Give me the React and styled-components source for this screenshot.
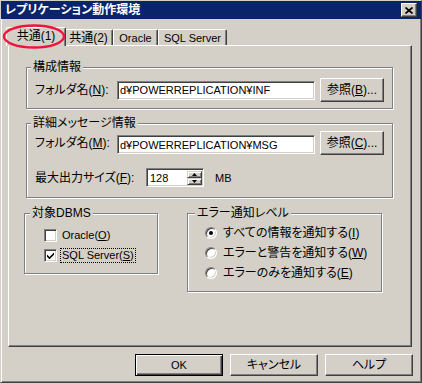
import React from 'react';
import styled, { createGlobalStyle } from 'styled-components';

const Global = createGlobalStyle`
  html, body { margin: 0; padding: 0; background: #d4d0c8; }
  body {
    font-family: "Liberation Sans", "Noto Sans CJK JP", sans-serif;
    font-size: 12px;
    font-feature-settings: "palt";
    color: #000;
  }
`;

const Window = styled.div`
  box-sizing: border-box;
  width: 422px;
  height: 383px;
  background: #d4d0c8;
  border: 1px solid;
  border-color: #d4d0c8 #404040 #404040 #d4d0c8;
  box-shadow: inset 1px 1px #fff, inset -1px -1px #808080;
  display: flex;
  flex-direction: column;
`;

const TitleBar = styled.div`
  height: 18px;
  background: #0a246a;
  display: flex;
  align-items: center;
  justify-content: space-between;
  padding: 0 4px;
  color: #fff;
  font-weight: bold;
  font-size: 12px;
  line-height: 14px;
`;

const CloseBtn = styled.div`
  box-sizing: border-box;
  width: 16px;
  height: 14px;
  background: #d4d0c8;
  border: 1px solid;
  border-color: #fff #404040 #404040 #fff;
  box-shadow: inset -1px -1px #808080;
  display: flex;
  align-items: center;
  justify-content: center;
`;

const Body = styled.div`
  flex: 1;
  display: flex;
  flex-direction: column;
  padding: 8px 0 0 7px;
`;

const TabStrip = styled.div`
  position: relative;
  display: flex;
  align-items: flex-end;
  height: 18px;
`;

const Tab = styled.div`
  box-sizing: border-box;
  position: relative;
  z-index: ${p => (p.$active ? 2 : 1)};
  width: ${p => p.$w + (p.$active ? 4 : 0)}px;
  height: ${p => (p.$active ? 19 : 16)}px;
  margin: 0 ${p => (p.$active ? '-2px' : '0')} ${p => (p.$active ? '-1px' : '0')};
  padding-bottom: ${p => (p.$active ? 2 : 0)}px;
  background: #d4d0c8;
  border-left: 1px solid #fff;
  border-top: 1px solid #fff;
  border-right: 1px solid #404040;
  border-radius: 2px 2px 0 0;
  box-shadow: inset -1px 0 #808080;
  display: flex;
  align-items: center;
  justify-content: center;
  white-space: nowrap;
  font-size: ${p => (p.$latin ? 11 : 12)}px;
  line-height: 14px;
`;

const Annotation = styled.svg`
  position: absolute;
  left: -6px;
  top: -3px;
  z-index: 5;
  overflow: visible;
`;

const Panel = styled.div`
  box-sizing: border-box;
  width: 404px;
  height: 302px;
  border: 1px solid;
  border-color: #fff #404040 #404040 #fff;
  box-shadow: inset -1px -1px #808080;
  padding: 21px 18px 0 17px;
  display: flex;
  flex-direction: column;
`;

const Group = styled.div`
  position: relative;
  box-sizing: border-box;
  border: 1px solid #808080;
  box-shadow: inset 1px 1px #fff, 1px 1px #fff;
  margin-top: ${p => p.$mt || 0}px;
  margin-left: ${p => p.$ml || 0}px;
  width: ${p => (p.$w ? `${p.$w}px` : 'auto')};
  height: ${p => (p.$h ? `${p.$h}px` : 'auto')};
  padding: ${p => p.$pad};
`;

const GroupTitle = styled.span`
  position: absolute;
  top: -8px;
  left: ${p => p.$x}px;
  padding: 0 2px;
  background: #d4d0c8;
  line-height: 14px;
  font-size: 12px;
  white-space: nowrap;
`;

const FolderRow = styled.div`
  display: grid;
  grid-template-columns: 82px 203px 64px;
  align-items: center;
  height: 24px;
`;

const Text = styled.span`
  font-size: ${p => (p.$latin ? 11 : 12)}px;
  line-height: 14px;
  white-space: nowrap;
`;

const Field = styled.div`
  box-sizing: border-box;
  width: 198px;
  height: 19px;
  background: #fff;
  border: 1px solid;
  border-color: #808080 #fff #fff #808080;
  box-shadow: inset 1px 1px #404040, inset -1px -1px #d4d0c8;
  padding: 0 2px 0 2px;
  display: flex;
  align-items: center;
  font-size: 11px;
  line-height: 14px;
  white-space: nowrap;
  overflow: hidden;
  margin-top: ${p => p.$dy || 0}px;
`;

const Button = styled.div`
  box-sizing: border-box;
  width: ${p => p.$w}px;
  height: ${p => p.$h}px;
  background: #d4d0c8;
  border: 1px solid;
  border-color: ${p => (p.$default ? '#000' : '#fff #404040 #404040 #fff')};
  box-shadow: ${p =>
    p.$default
      ? 'inset 1px 1px #fff, inset -1px -1px #404040, inset -2px -2px #808080'
      : 'inset -1px -1px #808080'};
  display: flex;
  align-items: center;
  justify-content: center;
  font-size: ${p => (p.$latin ? 11 : 12)}px;
  line-height: 14px;
  white-space: nowrap;
`;

const SizeRow = styled.div`
  display: flex;
  align-items: center;
  height: 19px;
  margin-top: 13px;
`;

const SizeLabel = styled(Text)`
  width: 111px;
`;

const SpinBox = styled.div`
  box-sizing: border-box;
  width: 58px;
  height: 19px;
  background: #fff;
  border: 1px solid;
  border-color: #808080 #fff #fff #808080;
  box-shadow: inset 1px 1px #404040, inset -1px -1px #d4d0c8;
  padding: 2px 1px 1px 2px;
  display: flex;
`;

const SpinValue = styled.span`
  flex: 1;
  font-size: 11px;
  line-height: 14px;
  padding-left: 1px;
`;

const SpinButtons = styled.div`
  width: 15px;
  display: flex;
  flex-direction: column;
`;

const SpinBtn = styled.div`
  box-sizing: border-box;
  flex: 1;
  background: #d4d0c8;
  border: 1px solid;
  border-color: #d4d0c8 #404040 #404040 #d4d0c8;
  box-shadow: inset 1px 1px #fff, inset -1px -1px #808080;
  display: flex;
  align-items: center;
  justify-content: center;
`;

const Unit = styled(Text)`
  margin-left: 11px;
`;

const BottomRow = styled.div`
  display: flex;
  align-items: flex-start;
  margin-top: 15px;
`;

const OptionList = styled.div`
  display: flex;
  flex-direction: column;
  gap: ${p => p.$gap}px;
`;

const Option = styled.div`
  display: flex;
  align-items: center;
  height: ${p => p.$h}px;
`;

const CheckBox = styled.div`
  box-sizing: border-box;
  width: 13px;
  height: 13px;
  background: #fff;
  border: 1px solid;
  border-color: #808080 #fff #fff #808080;
  box-shadow: inset 1px 1px #404040, inset -1px -1px #d4d0c8;
  display: flex;
  align-items: center;
  justify-content: center;
`;

const Radio = styled.div`
  box-sizing: border-box;
  width: 12px;
  height: 12px;
  border-radius: 50%;
  background: #fff;
  border: 1px solid;
  border-color: #808080 #fff #fff #808080;
  box-shadow: inset 1px 1px #404040, inset -1px -1px #d4d0c8;
  display: flex;
  align-items: center;
  justify-content: center;
`;

const Dot = styled.div`
  width: 4px;
  height: 4px;
  border-radius: 50%;
  background: #000;
`;

const OptionLabel = styled.span`
  margin-left: ${p => p.$gap}px;
  padding: 0 1px;
  font-size: ${p => (p.$latin ? 11 : 12)}px;
  line-height: 13px;
  white-space: nowrap;
  outline: ${p => (p.$focus ? '1px dotted #000' : 'none')};
  outline-offset: 0;
`;

const ButtonRow = styled.div`
  display: flex;
  justify-content: flex-end;
  gap: 7px;
  margin-top: 7px;
  padding-right: 8px;
`;

const Arrow = ({ up }) => (
  <svg width="5" height="3" viewBox="0 0 5 3">
    <path d={up ? 'M2.5 0 L5 3 L0 3 Z' : 'M0 0 L5 0 L2.5 3 Z'} fill="#000" />
  </svg>
);

export default function App() {
  return (
    <>
      <Global />
      <Window>
        <TitleBar>
          <span>レプリケーション動作環境</span>
          <CloseBtn>
            <svg width="8" height="7" viewBox="0 0 8 7">
              <path d="M0.5 0.5 L7.5 6.5 M7.5 0.5 L0.5 6.5" stroke="#000" strokeWidth="1.7" />
            </svg>
          </CloseBtn>
        </TitleBar>
        <Body>
          <TabStrip>
            <Tab $active $w={56}>共通(1)</Tab>
            <Tab $w={49}>共通(2)</Tab>
            <Tab $w={45} $latin>Oracle</Tab>
            <Tab $w={69} $latin>SQL Server</Tab>
            <Annotation width="64" height="25" viewBox="0 0 64 25">
              <ellipse cx="32" cy="12.5" rx="30" ry="11" fill="none" stroke="#f0143c" strokeWidth="2.4" />
            </Annotation>
          </TabStrip>
          <Panel>
            <Group $pad="10px 0 6px 8px">
              <GroupTitle $x={4}>構成情報</GroupTitle>
              <FolderRow>
                <Text>フォルダ名(<u>N</u>):</Text>
                <Field>d¥POWERREPLICATION¥INF</Field>
                <Button $w={64} $h={24}>参照(<u>B</u>)...</Button>
              </FolderRow>
            </Group>
            <Group $mt={14} $pad="7px 0 10px 8px">
              <GroupTitle $x={4}>詳細メッセージ情報</GroupTitle>
              <FolderRow>
                <Text>フォルダ名(<u>M</u>):</Text>
                <Field $dy={3}>d¥POWERREPLICATION¥MSG</Field>
                <Button $w={64} $h={24}>参照(<u>C</u>)...</Button>
              </FolderRow>
              <SizeRow>
                <SizeLabel>最大出力サイズ(<u>F</u>):</SizeLabel>
                <SpinBox>
                  <SpinValue>128</SpinValue>
                  <SpinButtons>
                    <SpinBtn><Arrow up /></SpinBtn>
                    <SpinBtn><Arrow /></SpinBtn>
                  </SpinButtons>
                </SpinBox>
                <Unit $latin>MB</Unit>
              </SizeRow>
            </Group>
            <BottomRow>
              <Group $ml={-2} $w={134} $h={61} $pad="13px 0 0 19px">
                <GroupTitle $x={5}>対象DBMS</GroupTitle>
                <OptionList $gap={4}>
                  <Option $h={16}>
                    <CheckBox />
                    <OptionLabel $gap={4} $latin>Oracle(<u>O</u>)</OptionLabel>
                  </Option>
                  <Option $h={16}>
                    <CheckBox>
                      <svg width="7" height="7" viewBox="0 0 7 7">
                        <path d="M0 2.5 L2.5 5 L7 0.5 L7 2.8 L2.5 7.3 L0 4.8 Z" fill="#000" />
                      </svg>
                    </CheckBox>
                    <OptionLabel $gap={4} $latin $focus>SQL Server(<u>S</u>)</OptionLabel>
                  </Option>
                </OptionList>
              </Group>
              <Group $ml={29} $w={195} $h={79} $pad="9px 0 0 17px">
                <GroupTitle $x={7}>エラー通知レベル</GroupTitle>
                <OptionList $gap={0}>
                  <Option $h={20}>
                    <Radio><Dot /></Radio>
                    <OptionLabel $gap={5}>すべての情報を通知する(<u>I</u>)</OptionLabel>
                  </Option>
                  <Option $h={20}>
                    <Radio />
                    <OptionLabel $gap={5}>エラーと警告を通知する(<u>W</u>)</OptionLabel>
                  </Option>
                  <Option $h={20}>
                    <Radio />
                    <OptionLabel $gap={5}>エラーのみを通知する(<u>E</u>)</OptionLabel>
                  </Option>
                </OptionList>
              </Group>
            </BottomRow>
          </Panel>
          <ButtonRow>
            <Button $w={88} $h={22} $default $latin>OK</Button>
            <Button $w={88} $h={22}>キャンセル</Button>
            <Button $w={88} $h={22}>ヘルプ</Button>
          </ButtonRow>
        </Body>
      </Window>
    </>
  );
}
